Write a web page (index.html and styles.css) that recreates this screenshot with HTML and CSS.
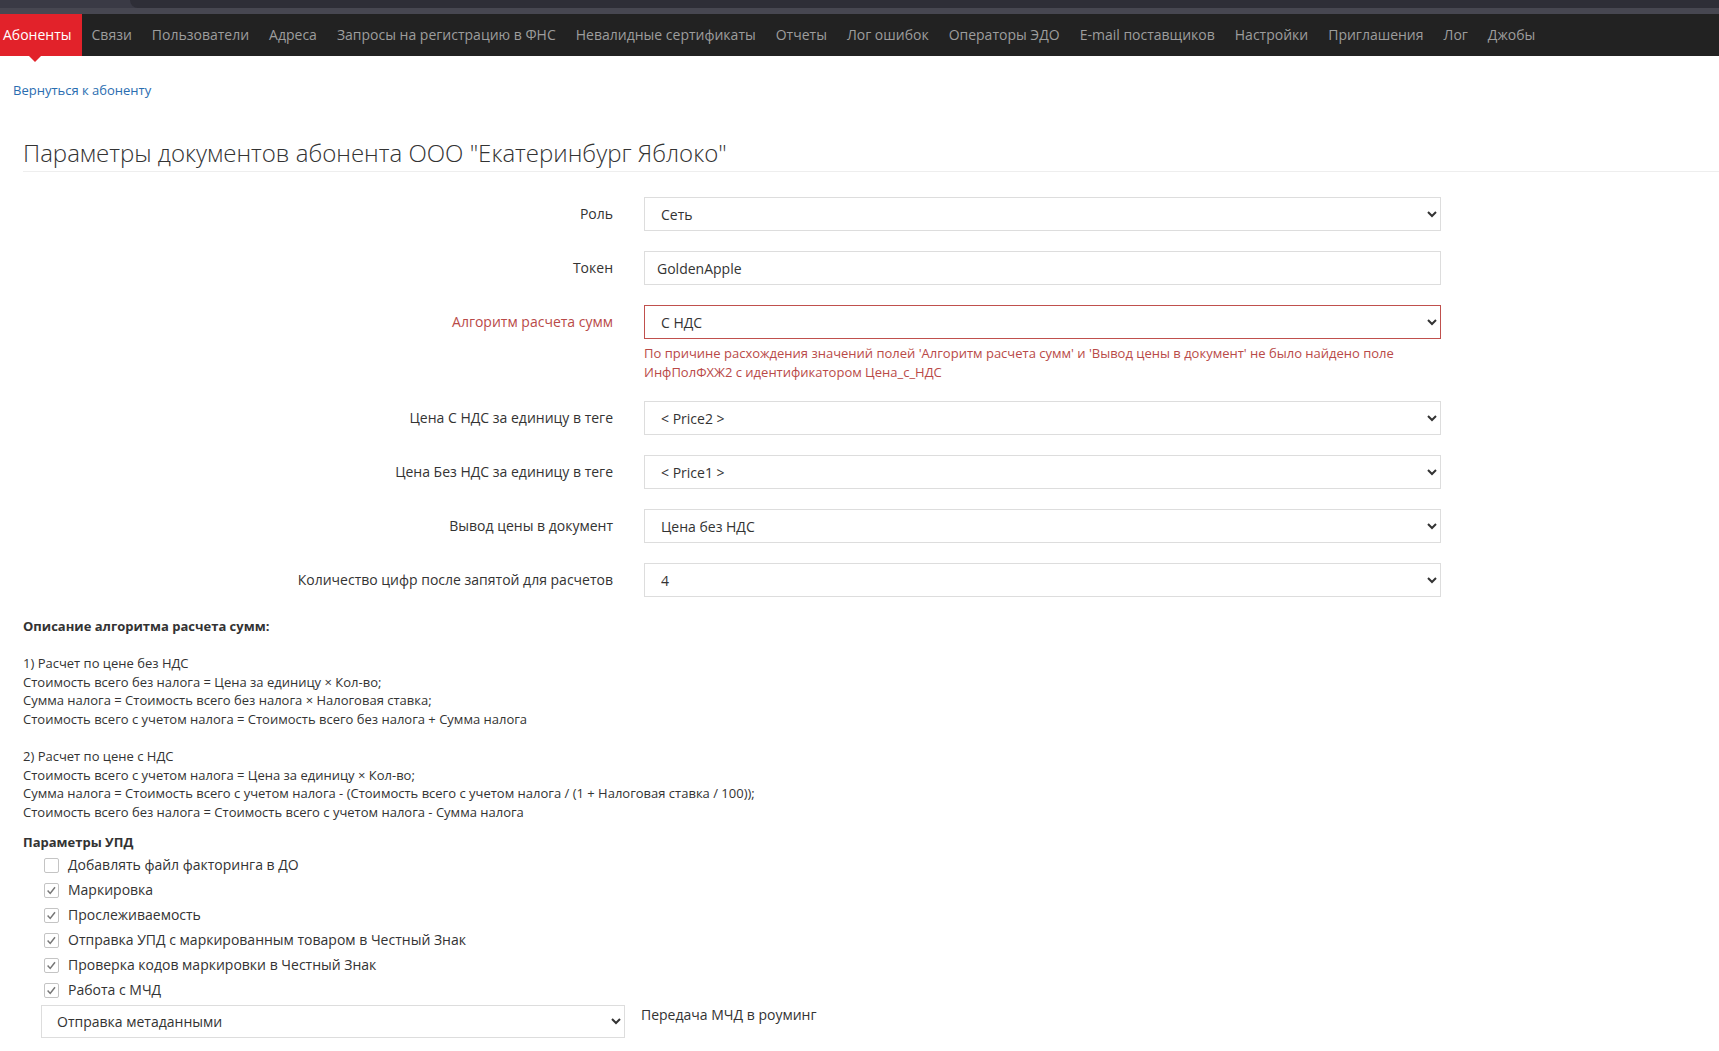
FILE: index.html
```html
<!DOCTYPE html>
<html lang="ru">
<head>
<meta charset="utf-8">
<title>Параметры документов</title>
<link rel="stylesheet" href="styles.css">
</head>
<body>
<div class="chrome-strip"><div class="chrome-top"><div class="chrome-bar"></div></div><div class="chrome-bottom"></div></div>
<nav class="navbar">
  <ul class="nav">
    <li class="nav-item active">Абоненты</li>
    <li class="nav-item">Связи</li>
    <li class="nav-item">Пользователи</li>
    <li class="nav-item">Адреса</li>
    <li class="nav-item">Запросы на регистрацию в ФНС</li>
    <li class="nav-item">Невалидные сертификаты</li>
    <li class="nav-item">Отчеты</li>
    <li class="nav-item">Лог ошибок</li>
    <li class="nav-item">Операторы ЭДО</li>
    <li class="nav-item">E-mail поставщиков</li>
    <li class="nav-item">Настройки</li>
    <li class="nav-item">Приглашения</li>
    <li class="nav-item">Лог</li>
    <li class="nav-item">Джобы</li>
  </ul>
</nav>

<main class="page">
  <a class="back-link" href="#">Вернуться к абоненту</a>
  <h3 class="page-title">Параметры документов абонента ООО "Екатеринбург Яблоко"</h3>

  <form class="form-grid">
    <label class="form-label">Роль</label>
    <div class="form-field">
      <select class="control"><option>Сеть</option></select>
    </div>

    <label class="form-label">Токен</label>
    <div class="form-field">
      <input class="control" type="text" value="GoldenApple">
    </div>

    <label class="form-label error">Алгоритм расчета сумм</label>
    <div class="form-field">
      <select class="control control-error"><option>С НДС</option></select>
      <div class="help-error">По причине расхождения значений полей 'Алгоритм расчета сумм' и 'Вывод цены в документ' не было найдено поле ИнфПолФХЖ2 с идентификатором Цена_с_НДС</div>
    </div>

    <label class="form-label">Цена С НДС за единицу в теге</label>
    <div class="form-field">
      <select class="control"><option>&lt; Price2 &gt;</option></select>
    </div>

    <label class="form-label">Цена Без НДС за единицу в теге</label>
    <div class="form-field">
      <select class="control"><option>&lt; Price1 &gt;</option></select>
    </div>

    <label class="form-label">Вывод цены в документ</label>
    <div class="form-field">
      <select class="control"><option>Цена без НДС</option></select>
    </div>

    <label class="form-label">Количество цифр после запятой для расчетов</label>
    <div class="form-field">
      <select class="control"><option>4</option></select>
    </div>
  </form>

  <div class="description">
    <b>Описание алгоритма расчета сумм:</b><br><br>
    1) Расчет по цене без НДС<br>
    Стоимость всего без налога = Цена за единицу × Кол-во;<br>
    Сумма налога = Стоимость всего без налога × Налоговая ставка;<br>
    Стоимость всего с учетом налога = Стоимость всего без налога + Сумма налога<br><br>
    2) Расчет по цене с НДС<br>
    Стоимость всего с учетом налога = Цена за единицу × Кол-во;<br>
    Сумма налога = Стоимость всего с учетом налога - (Стоимость всего с учетом налога / (1 + Налоговая ставка / 100));<br>
    Стоимость всего без налога = Стоимость всего с учетом налога - Сумма налога
  </div>

  <div class="upd-title">Параметры УПД</div>
  <ul class="checks">
    <li class="check-row"><span class="box"></span><span>Добавлять файл факторинга в ДО</span></li>
    <li class="check-row"><span class="box"><svg viewBox="0 0 15 15" width="15" height="15"><path d="M3.6 7.6 L6.2 10.4 L11 4.2" fill="none" stroke="#777" stroke-width="1.5"/></svg></span><span>Маркировка</span></li>
    <li class="check-row"><span class="box"><svg viewBox="0 0 15 15" width="15" height="15"><path d="M3.6 7.6 L6.2 10.4 L11 4.2" fill="none" stroke="#777" stroke-width="1.5"/></svg></span><span>Прослеживаемость</span></li>
    <li class="check-row"><span class="box"><svg viewBox="0 0 15 15" width="15" height="15"><path d="M3.6 7.6 L6.2 10.4 L11 4.2" fill="none" stroke="#777" stroke-width="1.5"/></svg></span><span>Отправка УПД с маркированным товаром в Честный Знак</span></li>
    <li class="check-row"><span class="box"><svg viewBox="0 0 15 15" width="15" height="15"><path d="M3.6 7.6 L6.2 10.4 L11 4.2" fill="none" stroke="#777" stroke-width="1.5"/></svg></span><span>Проверка кодов маркировки в Честный Знак</span></li>
    <li class="check-row"><span class="box"><svg viewBox="0 0 15 15" width="15" height="15"><path d="M3.6 7.6 L6.2 10.4 L11 4.2" fill="none" stroke="#777" stroke-width="1.5"/></svg></span><span>Работа с МЧД</span></li>
  </ul>

  <div class="mchd-row">
    <select class="control mchd-select"><option>Отправка метаданными</option></select>
    <span class="mchd-label">Передача МЧД в роуминг</span>
  </div>
</main>
</body>
</html>
```
FILE: styles.css
```css
* { box-sizing: border-box; }

html, body {
  margin: 0;
  padding: 0;
  background: #fff;
  overflow: hidden;
}

body {
  font-family: "Open Sans", "Noto Sans", "Liberation Sans", sans-serif;
  font-size: 14px;
  color: #333;
}

.chrome-strip { height: 14px; }
.chrome-top {
  height: 8px;
  background: #3a3a45;
  position: relative;
}
.chrome-bar {
  position: absolute;
  left: 130px;
  right: 0;
  top: 0;
  height: 8px;
  background: #2e2e37;
  border-bottom-left-radius: 8px;
}
.chrome-bottom {
  height: 6px;
  background: #474751;
}

.navbar {
  background: #222;
  height: 42px;
}

.nav {
  list-style: none;
  margin: 0;
  padding: 0;
  display: flex;
  height: 42px;
}

.nav-item {
  position: relative;
  padding: 0 10px;
  line-height: 42px;
  color: #9d9d9d;
  font-size: 14px;
  white-space: nowrap;
}

.nav-item.active {
  background: #e2222a;
  color: #fff;
  padding: 0 10px 0 3px;
}

.nav-item.active::after {
  content: "";
  position: absolute;
  left: 29px;
  top: 42px;
  border-left: 6px solid transparent;
  border-right: 6px solid transparent;
  border-top: 6px solid #e2222a;
}

.back-link {
  display: block;
  margin: 25px 0 0 13px;
  font-size: 13px;
  line-height: 19px;
  color: #2a6db0;
  text-decoration: none;
}

.page-title {
  margin: 40px 0 0 23px;
  padding: 0 0 5px;
  font-size: 24px;
  line-height: 26px;
  font-weight: 300;
  color: #333;
  border-bottom: 1px solid #eee;
}

.form-grid {
  margin: 25px 0 0 23px;
  display: grid;
  grid-template-columns: 590px 797px;
  column-gap: 31px;
  row-gap: 20px;
}

.form-label {
  text-align: right;
  line-height: 34px;
  font-size: 14px;
  color: #333;
  white-space: nowrap;
}

.form-label.error { color: #b94a48; }

.control {
  display: block;
  width: 100%;
  height: 34px;
  padding: 6px 12px;
  border: 1px solid #ddd;
  border-radius: 0;
  background-color: #fff;
  font-family: "Open Sans", "Noto Sans", sans-serif;
  font-size: 14px;
  color: #333;
  outline: none;
}

.control-error { border-color: #c0504d; }

.help-error {
  margin-top: 5px;
  font-size: 13px;
  line-height: 18.6px;
  color: #b94a48;
}

.description {
  margin: 20px 0 0 23px;
  font-size: 13px;
  line-height: 1.42857;
  color: #333;
}

.description b { font-weight: 700; }

.upd-title {
  margin: 12px 0 0 23px;
  font-size: 13px;
  line-height: 18.6px;
  font-weight: 700;
}

.checks {
  list-style: none;
  margin: 0;
  padding: 0 0 0 44px;
}

.check-row {
  display: flex;
  align-items: center;
  height: 25px;
  font-size: 14px;
}

.box {
  width: 15px;
  height: 15px;
  margin-top: 2px;
  border: 1px solid #c4c4c4;
  border-radius: 2px;
  margin-right: 9px;
  display: flex;
  align-items: center;
  justify-content: center;
  background: #fff;
  overflow: hidden;
}

.box svg { display: block; flex: none; }

.mchd-row {
  display: flex;
  align-items: flex-start;
  margin: 3px 0 0 41px;
}

.mchd-select {
  width: 584px;
  height: 33px;
  padding: 5px 11px;
}

.mchd-label {
  margin-left: 16px;
  font-size: 14px;
  line-height: 19px;
}
```
